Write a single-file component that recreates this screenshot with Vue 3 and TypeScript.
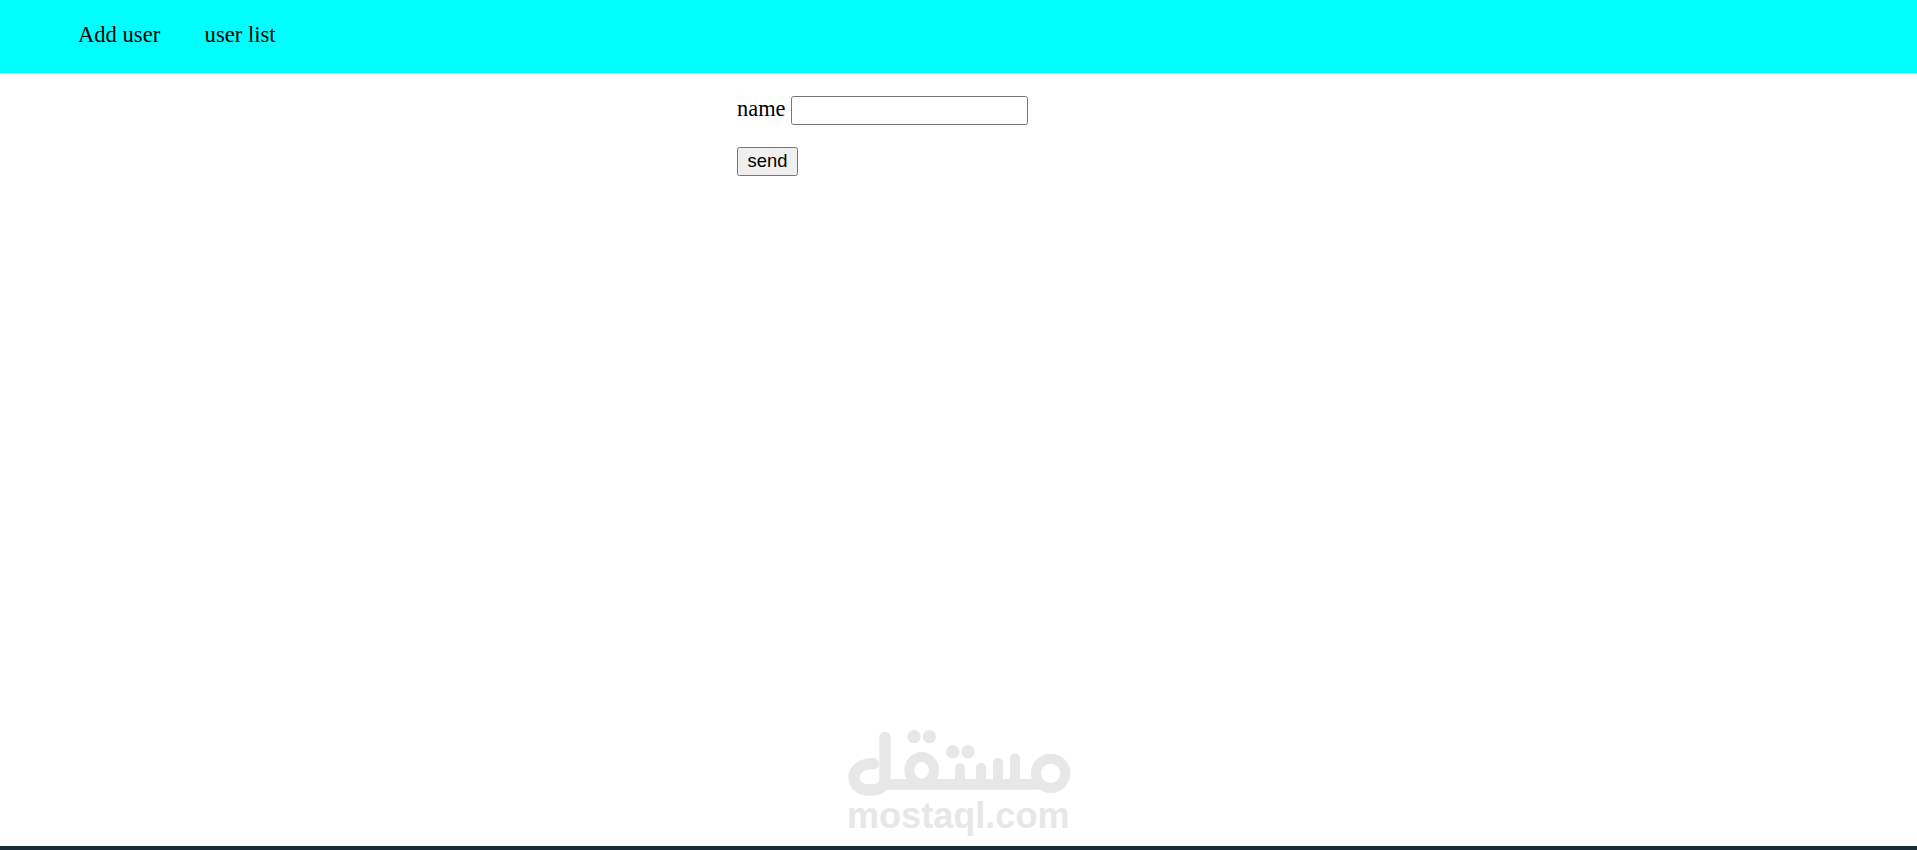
<script setup lang="ts">
const links: string[] = ['Add user', 'user list']
</script>

<template>
  <div class="page">
    <nav class="nav">
      <a v-for="l in links" :key="l" class="link" href="#">{{ l }}</a>
    </nav>
    <form class="form" @submit.prevent>
      <p class="row">
        <label for="name">name</label>
        <input id="name" type="text" />
      </p>
      <p class="row">
        <button type="submit">send</button>
      </p>
    </form>
    <div class="mark">
      <svg class="logo" viewBox="0 0 810 260" width="270" height="86.67" fill="none" stroke="#e7e7e7" stroke-width="30" stroke-linecap="round">
        <path stroke-width="34" d="M195 67V188C195 213 182 225 155 225H147C117 225 102 207 102 189C102 166 120 146 160 146" />
        <path stroke-width="32" d="M190 208H650" />
        <ellipse cx="305" cy="166" rx="37" ry="40" />
        <path d="M420 159V205M483 159V205M534 144V205M585 130V205" />
        <circle cx="692" cy="175" r="44" />
        <g fill="#e7e7e7" stroke="none">
          <circle cx="282" cy="65" r="20" />
          <circle cx="328" cy="65" r="20" />
          <circle cx="398" cy="110" r="20" />
          <circle cx="444" cy="110" r="20" />
        </g>
      </svg>
      <span class="word">mostaql.com</span>
    </div>
    <div class="bar"></div>
  </div>
</template>

<style scoped>
.page {
  position: relative;
  height: 850px;
  display: flex;
  flex-direction: column;
  overflow: hidden;
  font-family: "Liberation Serif", serif;
  font-size: 22.4px;
  color: #000;
  background: #fff;
}
.nav {
  height: 73px;
  flex: none;
  background: #0ff;
  display: flex;
  gap: 44.4px;
  padding: 21px 0 0 78px;
  box-sizing: border-box;
}
.link {
  color: #000;
  text-decoration: none;
  font-size: 22.6px;
  line-height: 27px;
}
.form {
  width: 443px;
  margin: 0 auto;
  flex: 1;
  padding-top: 23px;
}
.row {
  margin: 0 0 23px;
  height: 28px;
  display: flex;
  align-items: center;
  gap: 5px;
}
label {
  position: relative;
  top: -1px;
}
input {
  width: 237px;
  height: 29px;
  box-sizing: border-box;
  border: 1px solid #767676;
  border-radius: 2.5px;
  padding: 1px 2px;
  background: #fff;
}
button {
  width: 61px;
  height: 29px;
  box-sizing: border-box;
  border: 1px solid #767676;
  border-radius: 2.5px;
  background: #efefef;
  font-family: "Liberation Sans", sans-serif;
  font-size: 18.4px;
  padding: 0;
  color: #000;
}
.mark {
  position: absolute;
  left: 820px;
  top: 715px;
  width: 270px;
}
.logo {
  display: block;
}
.word {
  position: absolute;
  left: 27px;
  top: 81px;
  font-family: "Liberation Sans", sans-serif;
  font-weight: 700;
  font-size: 36.1px;
  line-height: 40px;
  color: #e7e7e7;
  white-space: nowrap;
}
.bar {
  height: 4px;
  flex: none;
  background: #1a2e35;
}
</style>
